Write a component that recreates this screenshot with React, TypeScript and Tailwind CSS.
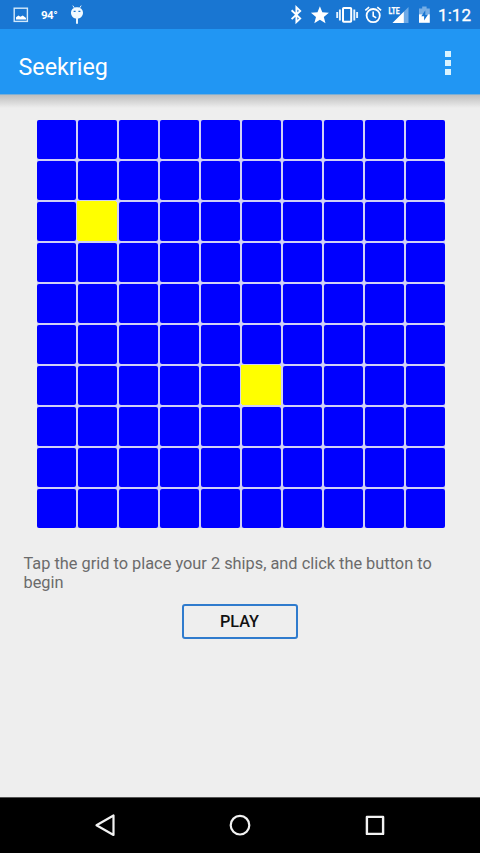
import React from "react";

const SIZE = 10;
const ships = new Set([21, 65]);

function StatusBar() {
  return (
    <div className="flex h-[29px] items-center bg-[#1976d2] text-white">
      <svg className="ml-[13px] shrink-0" width="16" height="29" viewBox="13 0 16 29">
        <rect x="14.2" y="8.2" width="13.2" height="13.2" fill="none" stroke="#d3e9fb" strokeWidth="1.4" />
        <path d="M16 19.6v-2.4l2.4-1.8 2 1.4 2.4-1.4 3.2 2.6v1.6z" fill="#fff" />
      </svg>
      <span className="ml-3 w-[17px] whitespace-nowrap pt-[2px] text-[11.5px] leading-none font-bold tracking-[-0.5px]">94°</span>
      <svg className="ml-[12px] shrink-0" width="14" height="29" viewBox="70 0 14 29">
        <path d="M72.8 5.600l2 3M81.200 5.600l-2 3" stroke="#e8f5ff" strokeWidth="1" />
        <path d="M77 7.200c3.500 0 6 2.300 6 5.600s-2.500 5.900-6 5.900-6-2.600-6-5.900 2.500-5.600 6-5.600z" fill="#f1faff" />
        <path d="M77 18v5" stroke="#e8f5ff" strokeWidth="2" strokeLinecap="round" />
        <path d="M73.600 11.300h2M78.400 11.300h2" stroke="#1976d2" strokeWidth="1.200" />
      </svg>
      <svg className="ml-auto shrink-0" width="14" height="29" viewBox="289 0 14 29">
        <path d="M291.600 10.200l8.600 8.200-3.800 3.700V7.200l3.800 3.700-8.600 8.200" fill="none" stroke="#fff" strokeWidth="1.900" />
      </svg>
      <svg className="ml-[7px] shrink-0" width="20" height="29" viewBox="310 0 20 29">
        <path d="M319.900 6.200l2.400 6.100 6.600.4-5.100 4.200 1.700 6.400-5.600-3.600-5.600 3.600 1.700-6.400-5.100-4.200 6.600-.4z" fill="#fff" />
      </svg>
      <svg className="ml-[6px] shrink-0" width="23" height="29" viewBox="336 0 23 29">
        <rect x="343" y="8" width="8.200" height="13.800" rx=".8" fill="none" stroke="#fff" strokeWidth="2" />
        <path d="M339.900 9.500v11M354.300 9.500v11M337.200 12v6M357.100 12v6" stroke="#e6f3fe" strokeWidth="1.900" />
      </svg>
      <svg className="ml-[5px] shrink-0" width="19" height="29" viewBox="364 0 19 29">
        <circle cx="373.200" cy="15.600" r="6.600" fill="none" stroke="#fff" strokeWidth="1.800" />
        <path d="M373.200 11.500v4.500l3 1.900M365.300 10.300l3.800-3.200M381.100 10.300l-3.800-3.200" fill="none" stroke="#fff" strokeWidth="1.600" />
      </svg>
      <svg className="ml-[5px] shrink-0" width="22" height="29" viewBox="388 0 22 29">
        <path d="M408.500 7v16h-16l10-10V13z" fill="#6faae6" />
        <path d="M403.800 11.700V23h-11.300z" fill="#fff" />
        <text x="388.500" y="13.500" fill="#fff" stroke="#fff" strokeWidth="0.250" fontSize="8.800" fontWeight="700" fontFamily="Roboto, sans-serif" textLength="11.200" lengthAdjust="spacingAndGlyphs">LTE</text>
      </svg>
      <svg className="ml-[8px] shrink-0" width="13" height="29" viewBox="418 0 13 29">
        <path d="M422.200 6.500h4.400v2h3.200v6H419v-6h3.200z" fill="#76aee6" />
        <path d="M419 14.300h10.800v8.500H419z" fill="#fff" />
        <path d="M425.300 10.200l-4 6h2.800v4.300l4-6h-2.800z" fill="#1976d2" />
      </svg>
      <span className="ml-[7px] w-[42px] whitespace-nowrap pt-[2px] text-[17px] leading-none tracking-[0.1px] [-webkit-text-stroke:0.3px_white]">1:12</span>
    </div>
  );
}

function AppBar() {
  return (
    <header className="flex h-[65px] items-center justify-between bg-[#2196f3] pr-7 pl-[18.500px] text-white">
      <h1 className="pt-[13px] text-[23.300px] leading-none">Seekrieg</h1>
      <button aria-label="More options" className="mb-[-3px] flex w-[7px] flex-col gap-[2.500px]">
        <span className="size-[6.300px] bg-[#d9f3ff]" />
        <span className="size-[6.300px] bg-[#d9f3ff]" />
        <span className="size-[6.300px] bg-[#d9f3ff]" />
      </button>
    </header>
  );
}

function Board() {
  return (
    <div className="ml-[36.500px] grid h-[408.200px] w-[408.200px] shrink-0 grid-cols-10 grid-rows-10 gap-[2px] rounded-[2px] bg-[#d0d0f6]">
      {Array.from({ length: SIZE * SIZE }, (_, i) => (
        <div
          key={i}
          className={ships.has(i) ? "bg-[#ffff00] shadow-[-1px_-1px_0_0_#ffff00]" : "rounded-[2px] bg-[#0000ff]"}
        />
      ))}
    </div>
  );
}

function NavBar() {
  return (
    <nav className="flex h-14 items-center justify-center gap-[111px] border-t border-[#555] bg-black pb-px">
      <svg width="24" height="24" viewBox="0 0 24 24" fill="none" stroke="#f2f2f2" strokeWidth="2.200" strokeLinejoin="round">
        <path d="M20.500 2.500v19.500L3.500 12.300z" />
      </svg>
      <svg width="24" height="24" viewBox="0 0 24 24" fill="none" stroke="#f2f2f2" strokeWidth="2.200">
        <circle cx="12" cy="12.200" r="9.300" />
      </svg>
      <svg width="24" height="24" viewBox="0 0 24 24" fill="none" stroke="#f2f2f2" strokeWidth="2.400" strokeLinejoin="round">
        <rect x="3.900" y="3.900" width="16.200" height="17" />
      </svg>
    </nav>
  );
}

export default function App() {
  return (
    <div className="flex h-[853px] w-[480px] flex-col overflow-hidden bg-[#eeeeee] font-['Roboto',sans-serif]">
      <StatusBar />
      <AppBar />
      <main className="flex flex-1 flex-col">
        <div className="h-[25.500px] shrink-0">
          <div className="h-px bg-[#7baed5]" />
          <div className="h-[13px] bg-linear-to-b from-[#bebebe] to-[#eeeeee]" />
        </div>
        <Board />
        <p className="mt-[26.300px] ml-[23.500px] w-[432px] text-[16.350px] leading-[19px] text-[#6b6b6b]">
          Tap the grid to place your 2 ships, and click the button to begin
        </p>
        <button className="mt-[12px] ml-[181.500px] h-[35px] w-[116px] rounded-[3px] border-2 border-[#2f7bcd] pt-px text-[16.300px] leading-none font-medium text-[#111]">
          PLAY
        </button>
      </main>
      <NavBar />
    </div>
  );
}
